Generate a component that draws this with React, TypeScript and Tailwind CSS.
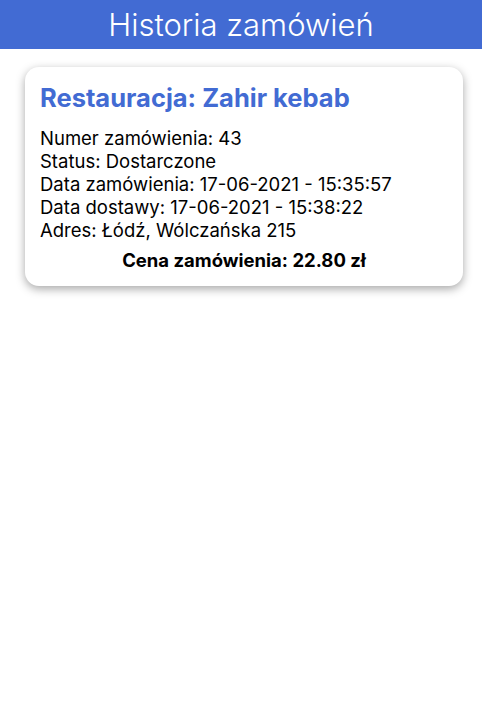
const ORDER = {
  restaurant: 'Zahir kebab',
  number: 43,
  status: 'Dostarczone',
  ordered: '17-06-2021 - 15:35:57',
  delivered: '17-06-2021 - 15:38:22',
  address: 'Łódź, Wólczańska 215',
  price: '22.80',
}

export default function App() {
  return (
    <div className="min-h-[722px] w-full bg-white font-['Inter','Liberation_Sans',sans-serif]">
      <div className="flex h-[49px] items-center justify-center bg-[#426bd3]">
        <h1 className="text-[31px] font-light leading-none text-white">Historia zamówień</h1>
      </div>

      <div className="pl-[25px] pr-[19px] pt-[18px]">
        <div className="rounded-[14px] bg-white px-[15px] pb-[14px] pt-[16px] shadow-[0_3px_10px_rgba(0,0,0,0.35)]">
          <h2 className="text-[25.5px] font-bold leading-[30px] text-[#426bd3]">
            Restauracja: {ORDER.restaurant}
          </h2>
          <div className="mt-[14px] text-[18.5px] leading-[23px] text-black">
            <p>Numer zamówienia: {ORDER.number}</p>
            <p>Status: {ORDER.status}</p>
            <p>Data zamówienia: {ORDER.ordered}</p>
            <p>Data dostawy: {ORDER.delivered}</p>
            <p>Adres: {ORDER.address}</p>
          </div>
          <p className="mt-[7px] text-center text-[18.5px] font-bold leading-[23px] text-black">
            Cena zamówienia: {ORDER.price} zł
          </p>
        </div>
      </div>
    </div>
  )
}
